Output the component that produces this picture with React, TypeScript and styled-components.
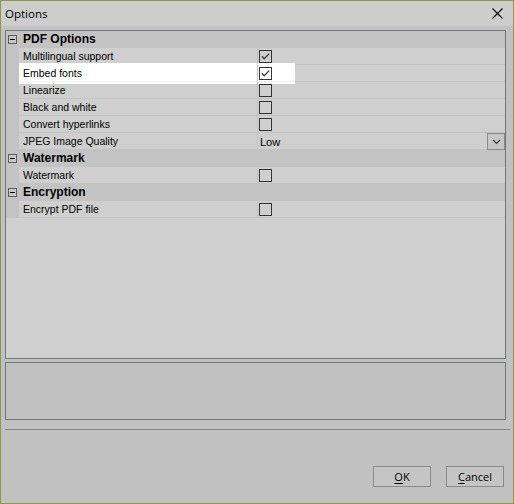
import React from "react";
import styled, { createGlobalStyle } from "styled-components";

const Global = createGlobalStyle`
  html, body { margin: 0; padding: 0; background: #c1c1c1; }
  * { box-sizing: border-box; }
`;

const Window = styled.div`
  width: 514px;
  height: 504px;
  border: 1px solid #8a9a3c;
  background: #c1c1c1;
  display: flex;
  flex-direction: column;
  font-family: "Liberation Sans", Arial, sans-serif;
  color: #000;
`;

const TitleBar = styled.div`
  height: 25px;
  background: #cdcdcd;
  display: flex;
  align-items: center;
  justify-content: space-between;
  padding: 0 10px 0 4px;
  font-family: "Open Sans", "Noto Sans", sans-serif;
  font-size: 11.5px;
  flex-shrink: 0;
`;

const Title = styled.span`
  margin-top: -1px;
`;

const Body = styled.div`
  flex: 1;
  display: flex;
  flex-direction: column;
  padding: 4px 7px 0 4px;
`;

const Grid = styled.div`
  height: 329px;
  border: 1px solid #6f767c;
  background: #cfcfcf;
  display: flex;
  flex-direction: column;
`;

const Row = styled.div<{ $selected?: boolean }>`
  position: relative;
  height: 17px;
  display: grid;
  grid-template-columns: 13px 239px 1fr;
  border-bottom: 1px solid #c3c3c3;
  ${(p) =>
    p.$selected &&
    `
    &::before {
      content: '';
      position: absolute;
      left: 13px;
      top: -2px;
      width: 276px;
      height: 21px;
      background: #ffffff;
      z-index: 0;
    }
    &::after {
      content: '';
      position: absolute;
      left: 13px;
      top: 16px;
      width: 276px;
      height: 1px;
      background: #f1f1f1;
      z-index: 0;
    }
  `}
`;

const Gutter = styled.div`
  background: #c3c3c3;
`;

const Label = styled.div`
  position: relative;
  z-index: 1;
  padding-left: 4px;
  font-size: 10.5px;
  line-height: 16px;
  border-right: 1px solid #c3c3c3;
  white-space: nowrap;
`;

const Value = styled.div`
  position: relative;
  z-index: 1;
  display: flex;
  align-items: center;
  padding-left: 1px;
`;

const CategoryRow = styled.div`
  height: 17px;
  background: #c3c3c3;
  display: flex;
  align-items: center;
  border-bottom: 1px solid #c3c3c3;
  padding-left: 2px;
`;

const Toggle = styled.div`
  width: 9px;
  height: 9px;
  border: 1px solid #5e5e5e;
  background: #c8c8c8;
  display: flex;
  align-items: center;
  justify-content: center;
  margin-right: 6px;
  margin-top: 1px;
  &::after {
    content: '';
    width: 5px;
    height: 1px;
    background: #000;
  }
`;

const CategoryText = styled.span`
  font-weight: bold;
  font-size: 12px;
`;

const Box = styled.div`
  width: 13px;
  height: 13px;
  border: 1px solid #333;
  display: flex;
  align-items: center;
  justify-content: center;
`;

const ValueText = styled.span`
  font-size: 11px;
  padding-left: 1px;
  flex: 1;
`;

const DropButton = styled.div`
  width: 18px;
  height: 17px;
  border: 1px solid #8a8a8a;
  background: #c6c6c6;
  display: flex;
  align-items: center;
  justify-content: center;
  align-self: flex-start;
`;

const Description = styled.div`
  margin-top: 3px;
  height: 58px;
  border: 1px solid #6f767c;
  background: #c1c1c1;
`;

const Separator = styled.div`
  margin-top: 9px;
  margin-right: -4px;
  height: 1px;
  background: #858585;
`;

const Buttons = styled.div`
  margin-top: 36px;
  display: flex;
  justify-content: flex-end;
  gap: 15px;
  padding-right: 2px;
`;

const Button = styled.button`
  width: 58px;
  height: 21px;
  border: 1px solid #8a8a8a;
  background: #c5c5c5;
  font-family: "Open Sans", "Noto Sans", sans-serif;
  font-size: 11px;
  color: #000;
  padding: 0 0 1px;
  display: flex;
  align-items: center;
  justify-content: center;
  u { text-decoration: underline; text-underline-offset: 2px; }
`;

const Check = ({ checked }: { checked?: boolean }) => (
  <Box>
    {checked && (
      <svg width="11" height="11" viewBox="0 0 11 11">
        <path d="M1.8 5.3 L4.2 7.8 L9.2 2.6" fill="none" stroke="#3c3c3c" strokeWidth="1.3" />
      </svg>
    )}
  </Box>
);

const Prop = ({
  label,
  children,
  selected,
}: {
  label: string;
  children: React.ReactNode;
  selected?: boolean;
}) => (
  <Row $selected={selected}>
    <Gutter />
    <Label>{label}</Label>
    <Value>{children}</Value>
  </Row>
);

const Category = ({ title }: { title: string }) => (
  <CategoryRow>
    <Toggle />
    <CategoryText>{title}</CategoryText>
  </CategoryRow>
);

export default function App() {
  return (
    <>
      <Global />
      <Window>
        <TitleBar>
          <Title>Options</Title>
          <svg width="11" height="11" viewBox="0 0 11 11">
            <path d="M0.5 0.5 L10.5 10.5 M10.5 0.5 L0.5 10.5" stroke="#000" strokeWidth="1.1" />
          </svg>
        </TitleBar>
        <Body>
          <Grid>
            <Category title="PDF Options" />
            <Prop label="Multilingual support">
              <Check checked />
            </Prop>
            <Prop label="Embed fonts" selected>
              <Check checked />
            </Prop>
            <Prop label="Linearize">
              <Check />
            </Prop>
            <Prop label="Black and white">
              <Check />
            </Prop>
            <Prop label="Convert hyperlinks">
              <Check />
            </Prop>
            <Prop label="JPEG Image Quality">
              <ValueText>Low</ValueText>
              <DropButton>
                <svg width="9" height="6" viewBox="0 0 9 6">
                  <path d="M1 1 L4.5 4.5 L8 1" fill="none" stroke="#3a3a3a" strokeWidth="1.1" />
                </svg>
              </DropButton>
            </Prop>
            <Category title="Watermark" />
            <Prop label="Watermark">
              <Check />
            </Prop>
            <Category title="Encryption" />
            <Prop label="Encrypt PDF file">
              <Check />
            </Prop>
          </Grid>
          <Description />
          <Separator />
          <Buttons>
            <Button>
              <u>O</u>K
            </Button>
            <Button>
              <u>C</u>ancel
            </Button>
          </Buttons>
        </Body>
      </Window>
    </>
  );
}
